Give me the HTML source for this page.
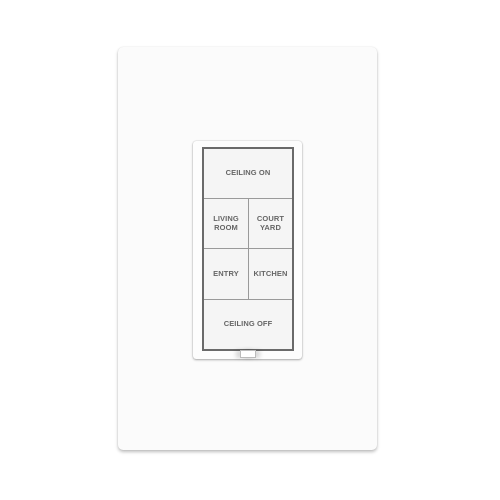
<!DOCTYPE html>
<html><head><style>
body{margin:0;width:500px;height:500px;background:#fff;position:relative;overflow:hidden;font-family:"Liberation Sans",sans-serif}
.plate{position:absolute;left:118px;top:47px;width:259px;height:403px;background:#fbfbfb;border-radius:5px;box-shadow:0 2px 3px rgba(0,0,0,.25),0 0 1px rgba(0,0,0,.15)}
.kp{position:absolute;left:193px;top:141px;width:109px;height:218px;background:#fdfdfd;border-radius:3px;box-shadow:0 1px 2px rgba(0,0,0,.3),0 0 1px rgba(0,0,0,.3)}
.fr{position:absolute;left:202px;top:147px;width:88px;height:200px;border:2px solid #6a6a6a;background:#9a9a9a}
.b{position:absolute;background:#f5f5f5;color:#666;font-weight:bold;font-size:7.5px;letter-spacing:.1px;display:flex;align-items:center;justify-content:center;text-align:center;line-height:8.5px}
.tab{position:absolute;left:240px;top:350px;width:14px;height:6px;background:#fff;border:1px solid #bbb;box-shadow:-4px 0 4px rgba(0,0,0,.15),4px 0 4px rgba(0,0,0,.15)}
</style></head><body>
<div class="plate"></div>
<div class="kp"></div>
<div class="fr">
<div class="b" style="left:0;top:0;width:88px;height:49px">CEILING ON</div>
<div class="b" style="left:0;top:50px;width:44px;height:49px">LIVING<br>ROOM</div>
<div class="b" style="left:45px;top:50px;width:43px;height:49px">COURT<br>YARD</div>
<div class="b" style="left:0;top:100px;width:44px;height:50px">ENTRY</div>
<div class="b" style="left:45px;top:100px;width:43px;height:50px">KITCHEN</div>
<div class="b" style="left:0;top:151px;width:88px;height:49px">CEILING OFF</div>
</div>
<div class="tab"></div>
</body></html>
